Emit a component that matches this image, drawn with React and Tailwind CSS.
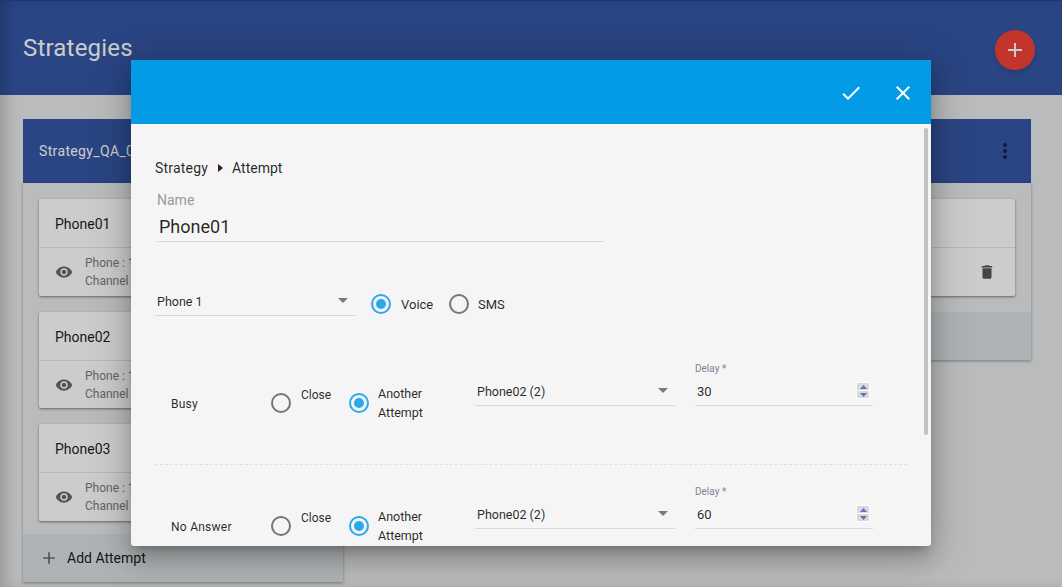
import React from 'react';

const Icon = ({ d, className }) => (
  <svg viewBox="0 0 24 24" className={className} fill="currentColor">
    <path d={d} />
  </svg>
);

const PLUS = 'M19 13h-6v6h-2v-6H5v-2h6V5h2v6h6v2z';
const CHECK = 'M9 16.17L4.83 12l-1.42 1.41L9 19 21 7l-1.41-1.41z';
const CLOSE = 'M19 6.41L17.59 5 12 10.59 6.41 5 5 6.41 10.59 12 5 17.59 6.41 19 12 13.41 17.59 19 19 17.59 13.41 12z';
const EYE = 'M12 4.5C7 4.5 2.73 7.61 1 12c1.73 4.39 6 7.5 11 7.5s9.27-3.11 11-7.5c-1.73-4.39-6-7.5-11-7.5zM12 17c-2.76 0-5-2.24-5-5s2.24-5 5-5 5 2.24 5 5-2.24 5-5 5zm0-8c-1.66 0-3 1.34-3 3s1.34 3 3 3 3-1.34 3-3-1.34-3-3-3z';
const TRASH = 'M6 19c0 1.1.9 2 2 2h8c1.1 0 2-.9 2-2V7H6v12zM19 4h-3.5l-1-1h-5l-1 1H5v2h14V4z';
const MORE = 'M12 8c1.1 0 2-.9 2-2s-.9-2-2-2-2 .9-2 2 .9 2 2 2zm0 2c-1.1 0-2 .9-2 2s.9 2 2 2 2-.9 2-2-.9-2-2-2zm0 6c-1.1 0-2 .9-2 2s.9 2 2 2 2-.9 2-2-.9-2-2-2z';

function AttemptCard({ name }) {
  return (
    <div className="h-[96.5px] bg-white rounded-[2px] shadow-[0_1px_3px_rgba(0,0,0,0.3),0_1px_2px_rgba(0,0,0,0.2)]">
      <div className="h-[49px] px-4 pt-[2px] flex items-center text-sm text-black/90 border-b border-black/10">{name}</div>
      <div className="h-12 pl-4 flex items-center">
        <Icon d={EYE} className="w-[18px] h-[18px] text-[#6b6b6b]" />
        <div className="ml-3 text-xs leading-[18px] text-[#7d7d7d]">
          <div>Phone : 1</div>
          <div>Channel : Voice</div>
        </div>
        <Icon d={TRASH} className="w-[18px] h-[18px] ml-auto mr-[19px] text-[#555]" />
      </div>
    </div>
  );
}

function AddAttempt() {
  return (
    <div className="h-12 pl-4 flex items-center bg-[#dde0e3]">
      <Icon d={PLUS} className="w-5 h-5 text-[#6b6b6b]" />
      <span className="ml-2 text-sm text-black/90">Add Attempt</span>
    </div>
  );
}

function Radio({ checked, className = '' }) {
  return (
    <span className={`w-5 h-5 shrink-0 rounded-full border-2 flex items-center justify-center ${checked ? 'border-[#29a9eb]' : 'border-[#757575]'} ${className}`}>
      {checked && <span className="w-[10px] h-[10px] rounded-full bg-[#29a9eb]" />}
    </span>
  );
}

function Select({ value, className = '' }) {
  return (
    <div className={`relative w-[200px] h-[26px] pl-[2px] pt-[2px] border-b border-[#d9d9d9] text-[12.5px] leading-5 text-black/85 ${className}`}>
      {value}
      <svg viewBox="0 0 10 5" className="absolute right-[7px] top-[8px] w-[10px] h-[5px]">
        <polygon points="0,0 10,0 5,5" fill="#7b7b7b" />
      </svg>
    </div>
  );
}

function Spinner() {
  return (
    <div className="w-[14px] h-[17px] bg-white p-px flex flex-col gap-px">
      <div className="flex-1 bg-[#d9d9d9] flex items-center justify-center">
        <svg viewBox="0 0 7 4" className="w-[7px] h-1"><polygon points="3.5,0 7,4 0,4" fill="#5f73c4" /></svg>
      </div>
      <div className="flex-1 bg-[#d9d9d9] flex items-center justify-center">
        <svg viewBox="0 0 7 4" className="w-[7px] h-1"><polygon points="0,0 7,0 3.5,4" fill="#5f73c4" /></svg>
      </div>
    </div>
  );
}

function ResultRow({ label, delay, next, divider }) {
  return (
    <div className={`flex items-start h-[123px] text-[12.5px] text-black/85 ${divider ? 'border-b border-dashed border-[#dfdfdf]' : ''}`}>
      <div className="ml-4 mt-[52px] w-[100px] leading-5 text-xs tracking-[0.25px]">{label}</div>
      <Radio className="mt-[51px]" />
      <div className="ml-[10px] mt-[43px] w-[48px] leading-5 text-xs">Close</div>
      <Radio checked className="mt-[51px]" />
      <div className="ml-[9px] mt-[42px] w-[97px] leading-[19px]">
        Another<br />Attempt
      </div>
      <Select value={next} className="mt-[38px]" />
      <div className="ml-5 mt-[21px] w-[178px]">
        <div className="h-3 text-[10px] leading-3 text-[#7f8494]">Delay *</div>
        <div className="h-[31px] pl-[2px] pr-[3px] pt-[7px] flex items-start justify-between border-b border-[#d9d9d9]">
          <span className="text-[13px] leading-5">{delay}</span>
          <Spinner />
        </div>
      </div>
    </div>
  );
}

export default function App() {
  return (
    <div className="relative w-[1062px] h-[587px] overflow-hidden bg-[#e9eaeb] font-[Roboto,sans-serif]">
      {/* Page behind the dialog */}
      <div className="h-[95px] pl-[23px] pr-[27px] flex items-center justify-between bg-[#3557a5]">
        <h1 className="text-2xl tracking-[0.2px] text-white">Strategies</h1>
        <button className="w-10 h-10 mt-[5px] rounded-full bg-[#f44336] flex items-center justify-center text-white shadow-md">
          <Icon d={PLUS} className="w-6 h-6" />
        </button>
      </div>

      <div className="w-[1008px] ml-[23px] mt-6">
        <div className="h-16 pl-4 pr-[14px] flex items-center justify-between bg-[#3557a5] text-sm tracking-[0.35px] text-white">
          <span>Strategy_QA_01</span>
          <Icon d={MORE} className="w-6 h-6 text-black/60" />
        </div>
        <div className="flex items-start justify-between">
          <div className="w-[320px] shadow-[0_1px_3px_rgba(0,0,0,0.35)]">
            <div className="p-4 pb-[13px] flex flex-col gap-4">
              <AttemptCard name="Phone01" />
              <AttemptCard name="Phone02" />
              <AttemptCard name="Phone03" />
            </div>
            <AddAttempt />
          </div>
          <div className="w-[320px] shadow-[0_1px_3px_rgba(0,0,0,0.35)]">
            <div className="p-4">
              <AttemptCard name="Phone04" />
            </div>
            <AddAttempt />
          </div>
        </div>
      </div>

      {/* Backdrop */}
      <div className="absolute inset-0 bg-black/20 border-t border-black/20 shadow-[inset_10px_0_14px_-4px_rgba(0,0,0,0.18)]" />

      {/* Dialog */}
      <div className="absolute left-[131px] top-[60px] w-[800px] h-[486px] flex flex-col overflow-hidden rounded-[3px] bg-[#f5f5f5] shadow-[0_7px_8px_-4px_rgba(0,0,0,0.2),0_13px_19px_2px_rgba(0,0,0,0.14),0_5px_40px_6px_rgba(0,0,0,0.18)]">
        <div className="h-16 shrink-0 pt-[2px] pr-4 flex items-center justify-end gap-7 bg-[#039be5] text-white">
          <Icon d={CHECK} className="w-6 h-6" />
          <Icon d={CLOSE} className="w-6 h-6" />
        </div>
        <div className="relative flex-1 overflow-hidden pl-6">
          <div className="absolute right-[3px] top-1 w-1 h-[307px] rounded-full bg-[#c1c1c1]" />

          <div className="pt-[34px] flex items-center text-sm leading-5 text-black/85">
            <span className="tracking-[0.2px]">Strategy</span>
            <svg viewBox="0 0 5 8" className="ml-[10px] mr-[9px] w-[5px] h-2">
              <polygon points="0,0 5,4 0,8" fill="#3a1c1c" />
            </svg>
            <span>Attempt</span>
          </div>

          <div className="ml-[2px] mt-[14px] text-sm leading-4 text-[#9a9a9a]">Name</div>
          <div className="ml-[2px] w-[447px] h-[34px] pl-[2px] pt-[7px] border-b border-[#d9d9d9] text-lg leading-6 text-black/85">Phone01</div>

          <div className="mt-[48px] flex items-start text-[13px] text-black/85">
            <Select value="Phone 1" />
            <Radio checked className="ml-4 mt-1" />
            <span className="ml-[10px] mt-[5px] w-[31px] leading-5">Voice</span>
            <Radio className="ml-[17px] mt-1" />
            <span className="ml-[9px] mt-[5px] leading-5">SMS</span>
          </div>

          <div className="mt-[26px] w-[752px]">
            <ResultRow label="Busy" delay="30" next="Phone02 (2)" divider />
            <ResultRow label="No Answer" delay="60" next="Phone02 (2)" />
          </div>
        </div>
      </div>
    </div>
  );
}
